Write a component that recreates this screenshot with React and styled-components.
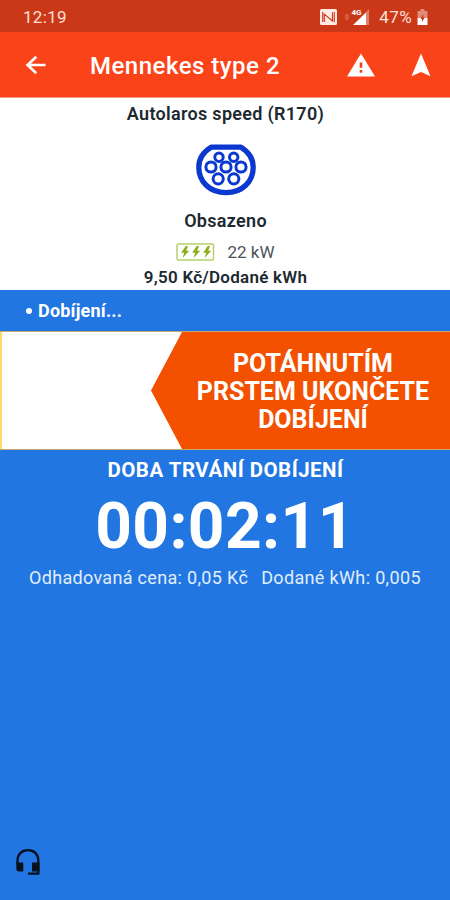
import React from "react";
import styled, { createGlobalStyle } from "styled-components";

const GlobalStyle = createGlobalStyle`
  * { box-sizing: border-box; }
  body { margin: 0; background: #2176e1; font-family: Roboto, "Liberation Sans", sans-serif; }
`;

const Screen = styled.div`
  width: 450px;
  height: 900px;
  display: flex;
  flex-direction: column;
  overflow: hidden;
  background: #2176e1;
`;

const Text = styled.div`
  font-size: ${(p) => p.$size}px;
  font-weight: ${(p) => p.$weight || 400};
  line-height: ${(p) => p.$line}px;
  letter-spacing: ${(p) => p.$spacing || 0}px;
  color: ${(p) => p.$color || "#fff"};
  white-space: pre;
`;

const StatusBar = styled.header`
  flex: none;
  height: 32px;
  display: flex;
  align-items: center;
  padding: 2px 22px 0 23px;
  background: #ca3817;
`;

const StatusIcons = styled.div`
  margin-left: auto;
  display: flex;
  align-items: center;
`;

const Percent = styled(Text)`
  margin: 0 5px 0 8px;
`;

const AppBar = styled.nav`
  flex: none;
  height: 66px;
  display: flex;
  align-items: center;
  padding: 0 19px 0 24px;
  background: #fb431a;
  border-bottom: 1px solid #fb9c86;
`;

const Title = styled(Text)`
  margin-left: 42px;
  padding-top: 3px;
  flex: 1;
`;

const IconButton = styled.button`
  display: flex;
  padding: 0;
  border: 0;
  background: none;
  margin-left: ${(p) => p.$gap || 0}px;
`;

const StationInfo = styled.section`
  flex: none;
  height: 192px;
  display: flex;
  flex-direction: column;
  align-items: center;
  padding: 4px 0 0 1px;
  background: #fff;
`;

const Connector = styled.div`
  height: 51px;
  margin: 18px 0 14px;
`;

const PowerRow = styled.div`
  display: flex;
  align-items: center;
  gap: 12px;
  margin-top: 7px;
  height: 24px;
`;

const Price = styled(Text)`
  margin-top: 1px;
`;

const StateStrip = styled.div`
  flex: none;
  height: 41px;
  display: flex;
  align-items: center;
  padding: 1px 0 0 26px;
`;

const Bullet = styled.span`
  width: 6px;
  height: 6px;
  margin: 0 6px 1px 0;
  border-radius: 50%;
  background: #fff;
`;

const SwipeTrack = styled.section`
  flex: none;
  height: 119px;
  display: flex;
  justify-content: flex-end;
  border-top: 1px solid #c3a96e;
  border-bottom: 1px solid #c3a96e;
  background: linear-gradient(to right, #fddc66 2px, #fff 2px);
`;

const SwipeHandle = styled.div`
  width: 299px;
  padding: 18px 18px 0 43px;
  background: #f35000;
  clip-path: polygon(31px 0, 100% 0, 100% 100%, 31px 100%, 0 50%);
  display: flex;
  flex-direction: column;
  align-items: center;
`;

const Session = styled.main`
  flex: 1;
  display: flex;
  flex-direction: column;
  align-items: center;
  padding-top: 7px;
`;

const SessionLabel = styled(Text)`
  padding-left: 1px;
`;

const Timer = styled(Text)`
  margin-top: 6px;
`;

const Figures = styled.div`
  width: 100%;
  display: flex;
  gap: 13px;
  padding-left: 29px;
  margin-top: 1px;
`;

const Support = styled.footer`
  margin-top: auto;
  width: 100%;
  padding: 0 0 19px 15px;
`;

const pins = [
  [23, 13.3, 4.2], [37.7, 13.3, 4.2],
  [15, 23, 5.1], [30, 23, 5.1], [45, 23, 5.1],
  [22.2, 34.8, 5.1], [37.8, 34.8, 5.1],
];

const ConnectorIcon = () => (
  <svg width="60" height="52" viewBox="0 0 60 52">
    <path d="M15 3.2H45C52 7.5 57.2 14.5 57.2 23.2C57.2 37.5 46.5 48.6 30 48.6S2.8 37.5 2.8 23.2C2.8 14.5 8 7.5 15 3.2Z" fill="#fff" stroke="#0b39cf" strokeWidth="5.3" strokeLinejoin="round" />
    {pins.map(([x, y, r]) => (
      <circle key={`${x}-${y}`} cx={x} cy={y} r={r} fill="none" stroke="#0b39cf" strokeWidth="3" />
    ))}
  </svg>
);

const PowerIcon = () => (
  <svg width="39" height="18" viewBox="0 0 39 18">
    <rect x="1" y="1" width="36.5" height="16" rx="1.5" fill="#fff" stroke="#b5d06d" strokeWidth="1.5" />
    {[5.2, 16.2, 27.2].map((x) => (
      <path key={x} transform={`translate(${x} 3)`} d="M4.5 0L0 6.8H3L1.4 12L8 4.8H5L6.8 0Z" fill="#8fae1b" />
    ))}
  </svg>
);

const NfcIcon = () => (
  <svg width="17" height="16" viewBox="0 0 17 16">
    <rect width="17" height="16" rx="1.5" fill="#ffe9e2" />
    <path d="M4.3 13V5.2L12.5 12V3.2M2.7 13V3M14.3 3V13" fill="none" stroke="#ca3817" strokeWidth="1.1" />
  </svg>
);

const SignalIcon = () => (
  <svg width="34" height="18" viewBox="0 0 34 18">
    <rect x="8.8" y="6.5" width="2.2" height="5" rx="1" fill="none" stroke="#de8069" strokeWidth="1" />
    <path d="M32 1V17H17Z" fill="#df806a" />
    <path d="M29 4.5V17H16Z" fill="#fff" />
    <text x="14.5" y="7" fontFamily="Roboto, sans-serif" fontSize="8" fontWeight="700" fill="#fff">4G</text>
  </svg>
);

const BatteryIcon = () => (
  <svg width="11" height="17" viewBox="0 0 11 17">
    <path d="M3.5 0H7.5V2H10.5V9H.5V2H3.5Z" fill="#e08c76" />
    <path d="M.5 9H10.5V16H.5Z" fill="#fff" />
    <path d="M6.3 4.5L3.5 10H5V13L7.8 8.4H6.3Z" fill="#ca3817" />
  </svg>
);

const BackIcon = () => (
  <svg width="24" height="22" viewBox="0 0 24 22">
    <path d="M21.5 11H3.5M12.3 2.7L3.5 11L12.3 19.3" fill="none" stroke="#fff" strokeWidth="2.6" />
  </svg>
);

const WarningIcon = () => (
  <svg width="28" height="24" viewBox="0 0 28 24">
    <path d="M14 .5L28 23.5H0Z" fill="#fff" />
    <path d="M12.7 9.5H15.3V14.8H12.7ZM12.7 17H15.3V19.8H12.7Z" fill="#f3421b" />
  </svg>
);

const NavigateIcon = () => (
  <svg width="20" height="24" viewBox="0 0 20 24">
    <path d="M10 .5L19.5 23.3L10 19L.5 23.3Z" fill="#fff" />
  </svg>
);

const HeadsetIcon = () => (
  <svg width="26" height="29" viewBox="0 0 26 29">
    <path d="M2.5 16V12.5C2.5 6.5 6.5 2.2 13 2.2S23.3 6.5 23.3 12.5V25.6H13" fill="none" stroke="#07101d" strokeWidth="2.3" />
    <path d="M1.3 14.5H8.3V23.5H4Q1.3 23.5 1.3 20.5ZM17 14.5H24.5V23.5H17Z" fill="#07101d" />
  </svg>
);

export default function App() {
  return (
    <>
      <GlobalStyle />
      <Screen>
        <StatusBar>
          <Text $size={17} $line={20} $spacing={0.3} $color="#ffe0d8">12:19</Text>
          <StatusIcons>
            <NfcIcon />
            <SignalIcon />
            <Percent $size={17} $line={20} $spacing={0.4} $color="#ffe0d8">47%</Percent>
            <BatteryIcon />
          </StatusIcons>
        </StatusBar>
        <AppBar>
          <IconButton aria-label="Zpět"><BackIcon /></IconButton>
          <Title $size={24} $weight={500} $line={28} $spacing={0.5}>Mennekes type 2</Title>
          <IconButton aria-label="Upozornění"><WarningIcon /></IconButton>
          <IconButton aria-label="Navigovat" $gap={36}><NavigateIcon /></IconButton>
        </AppBar>
        <StationInfo>
          <Text $size={18} $weight={600} $line={24} $spacing={0.3} $color="#1c2930">Autolaros speed (R170)</Text>
          <Connector><ConnectorIcon /></Connector>
          <Text $size={18} $weight={600} $line={24} $spacing={0.3} $color="#1c2930">Obsazeno</Text>
          <PowerRow>
            <PowerIcon />
            <Text $size={17} $line={24} $color="#4b5358">22 kW</Text>
          </PowerRow>
          <Price $size={17} $weight={600} $line={24} $spacing={0.25} $color="#1c2930">9,50 Kč/Dodané kWh</Price>
        </StationInfo>
        <StateStrip>
          <Bullet />
          <Text $size={18} $weight={700} $line={24} $spacing={0.2}>Dobíjení...</Text>
        </StateStrip>
        <SwipeTrack>
          <SwipeHandle>
            <Text $size={25} $weight={700} $line={28}>POTÁHNUTÍM</Text>
            <Text $size={25} $weight={700} $line={28}>PRSTEM UKONČETE</Text>
            <Text $size={25} $weight={700} $line={28}>DOBÍJENÍ</Text>
          </SwipeHandle>
        </SwipeTrack>
        <Session>
          <SessionLabel $size={20.5} $weight={700} $line={26} $spacing={0.48}>DOBA TRVÁNÍ DOBÍJENÍ</SessionLabel>
          <Timer $size={64} $weight={700} $line={76} $spacing={0.4}>00:02:11</Timer>
          <Figures>
            <Text $size={18} $line={24} $spacing={0.32} $color="#e2eefc">Odhadovaná cena: 0,05 Kč</Text>
            <Text $size={18} $line={24} $spacing={0.35} $color="#e2eefc">Dodané kWh: 0,005</Text>
          </Figures>
          <Support><HeadsetIcon /></Support>
        </Session>
      </Screen>
    </>
  );
}
